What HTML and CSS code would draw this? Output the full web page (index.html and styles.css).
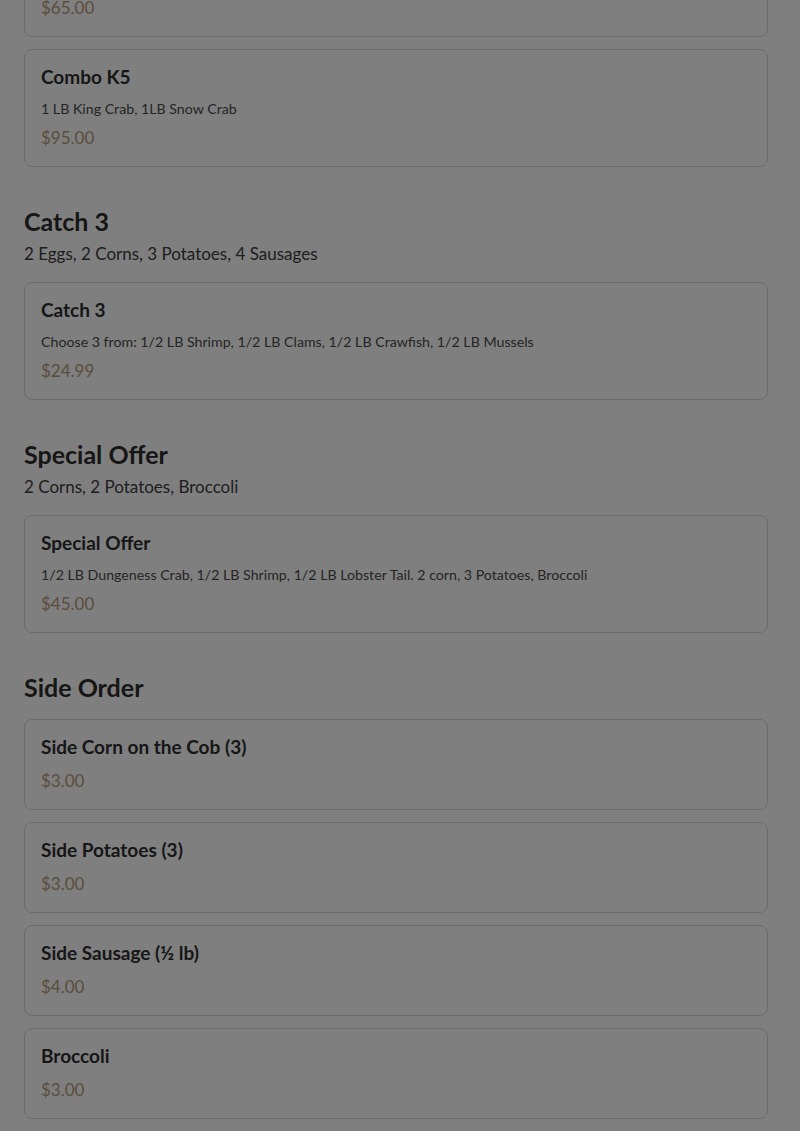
FILE: index.html
```html
<!DOCTYPE html>
<html lang="en">
<head>
<meta charset="utf-8">
<title>Menu</title>
<link rel="stylesheet" href="styles.css">
</head>
<body>
<main class="menu">
  <section class="section section-first">
    <div class="cards">
      <div class="card"><div class="price">$65.00</div></div>
      <div class="card">
        <div class="item-title">Combo K5</div>
        <div class="item-desc">1 LB King Crab, 1LB Snow Crab</div>
        <div class="price">$95.00</div>
      </div>
    </div>
  </section>

  <section class="section">
    <div class="section-head">
      <h2 class="section-title">Catch 3</h2>
      <p class="section-sub">2 Eggs, 2 Corns, 3 Potatoes, 4 Sausages</p>
    </div>
    <div class="cards">
      <div class="card">
        <div class="item-title">Catch 3</div>
        <div class="item-desc">Choose 3 from: 1/2 LB Shrimp, 1/2 LB Clams, 1/2 LB Crawfish, 1/2 LB Mussels</div>
        <div class="price">$24.99</div>
      </div>
    </div>
  </section>

  <section class="section">
    <div class="section-head">
      <h2 class="section-title">Special Offer</h2>
      <p class="section-sub">2 Corns, 2 Potatoes, Broccoli</p>
    </div>
    <div class="cards">
      <div class="card">
        <div class="item-title">Special Offer</div>
        <div class="item-desc">1/2 LB Dungeness Crab, 1/2 LB Shrimp, 1/2 LB Lobster Tail. 2 corn, 3 Potatoes, Broccoli</div>
        <div class="price">$45.00</div>
      </div>
    </div>
  </section>

  <section class="section">
    <div class="section-head">
      <h2 class="section-title">Side Order</h2>
    </div>
    <div class="cards">
      <div class="card">
        <div class="item-title">Side Corn on the Cob (3)</div>
        <div class="price">$3.00</div>
      </div>
      <div class="card">
        <div class="item-title">Side Potatoes (3)</div>
        <div class="price">$3.00</div>
      </div>
      <div class="card">
        <div class="item-title">Side Sausage (½ lb)</div>
        <div class="price">$4.00</div>
      </div>
      <div class="card">
        <div class="item-title">Broccoli</div>
        <div class="price">$3.00</div>
      </div>
    </div>
  </section>
</main>
<div class="backdrop"></div>
</body>
</html>
```

FILE: styles.css
```css
* { box-sizing: border-box; }
html, body { margin: 0; padding: 0; }
body {
  background: #ffffff;
  font-family: Lato, "Noto Sans", sans-serif;
  color: #303030;
  overflow: hidden;
}
.menu {
  padding: 0 32px 0 24px;
  margin-top: -21px;
}
.section + .section { margin-top: 38px; }
.section-head { margin-bottom: 16px; }
.section-title {
  margin: 0;
  font-size: 25px;
  line-height: 32px;
  font-weight: 700;
  color: #2c2c2c;
}
.section-sub {
  margin: 5px 0 0;
  font-size: 17px;
  line-height: 24px;
  color: #3c3c3c;
}
.cards {
  display: flex;
  flex-direction: column;
  gap: 12px;
}
.card {
  border: 1px solid #d6d6d6;
  border-radius: 8px;
  padding: 16px;
  background: #ffffff;
}
.item-title {
  font-size: 19px;
  line-height: 21px;
  font-weight: 700;
  color: #2e2e2e;
  margin-bottom: 12px;
}
.item-desc {
  font-size: 14.2px;
  line-height: 20px;
  color: #4a4a4a;
  margin-bottom: 7px;
}
.price {
  font-size: 17px;
  line-height: 24px;
  color: #b49a78;
}
.backdrop {
  position: fixed;
  inset: 0;
  background: rgba(0, 0, 0, 0.5);
}
```
